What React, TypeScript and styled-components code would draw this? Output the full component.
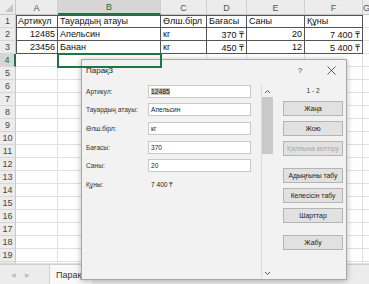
import React from "react";
import styled, { createGlobalStyle, css } from "styled-components";

const Global = createGlobalStyle`
  html, body { margin: 0; padding: 0; background: #ffffff; overflow: hidden; }
  body { width: 369px; height: 284px; font-family: "Liberation Sans", Arial, sans-serif; }
`;

const Page = styled.div`
  position: relative;
  width: 369px;
  height: 284px;
  overflow: hidden;
  display: flex;
  flex-direction: column;
`;

const Sheet = styled.div`
  height: 264px;
  overflow: hidden;
  display: grid;
  grid-template-columns: 16px 42px 103px 46px 40px 58px 58px 1fr;
  grid-template-rows: 15px repeat(19, 13px) 2px;
`;

const Corner = styled.div`
  position: relative;
  background: #ececec;
  border-right: 1px solid #c8c8c8;
  border-bottom: 1px solid #c8c8c8;
  box-sizing: border-box;
  &::after {
    content: "";
    position: absolute;
    right: 2px;
    bottom: 2px;
    border-left: 8px solid transparent;
    border-bottom: 8px solid #c4c4c4;
  }
`;

const ColHead = styled.div<{ $sel?: boolean }>`
  box-sizing: border-box;
  background: ${(p) => (p.$sel ? "#d6d6d6" : "#ececec")};
  color: ${(p) => (p.$sel ? "#1e6b41" : "#555")};
  border-right: 1px solid #cfcfcf;
  border-bottom: ${(p) => (p.$sel ? "2px solid #217346" : "1px solid #c8c8c8")};
  font-size: 9px;
  display: flex;
  align-items: center;
  justify-content: center;
  padding-top: 1px;
`;

const RowHead = styled.div<{ $sel?: boolean }>`
  box-sizing: border-box;
  background: ${(p) => (p.$sel ? "#d6d6d6" : "#ececec")};
  color: ${(p) => (p.$sel ? "#1e6b41" : "#444")};
  border-right: ${(p) => (p.$sel ? "2px solid #217346" : "1px solid #c8c8c8")};
  border-bottom: 1px solid #d8d8d8;
  font-size: 9px;
  display: flex;
  align-items: center;
  justify-content: center;
`;

const Cell = styled.div<{ $boxed?: boolean; $top?: boolean; $left?: boolean; $right?: boolean; $sel?: boolean }>`
  box-sizing: border-box;
  font-size: 9px;
  color: #111;
  white-space: nowrap;
  overflow: visible;
  display: flex;
  align-items: center;
  padding: 0 2px;
  justify-content: ${(p) => (p.$right ? "flex-end" : "flex-start")};
  border-right: 1px solid ${(p) => (p.$boxed ? "#555" : "#e0e0e0")};
  border-bottom: 1px solid ${(p) => (p.$boxed ? "#555" : "#e0e0e0")};
  ${(p) =>
    p.$top &&
    css`
      box-shadow: inset 0 1px 0 #555;
    `}
  ${(p) =>
    p.$left &&
    css`
      box-shadow: inset 1px 0 0 #555 ${p.$top ? ", inset 0 1px 0 #555" : ""};
    `}
  ${(p) =>
    p.$sel &&
    css`
      outline: 2px solid #217346;
      outline-offset: -1px;
      z-index: 1;
    `}
`;

const TabBar = styled.div`
  height: 20px;
  box-sizing: border-box;
  border-top: 1px solid #cfcfcf;
  background: #ececec;
  display: flex;
  align-items: stretch;
`;

const NavArrows = styled.div`
  width: 50px;
  display: flex;
  align-items: center;
  gap: 9px;
  padding-left: 11px;
  box-sizing: border-box;
  color: #bdbdbd;
  font-size: 6px;
  border-right: 1px solid #d0d0d0;
`;

const SheetTab = styled.div`
  background: #f8f8f8;
  padding: 0 6px;
  display: flex;
  align-items: center;
  font-size: 9px;
  color: #333;
`;

/* Dialog */
const Dialog = styled.div`
  position: absolute;
  left: 81px;
  top: 59px;
  width: 266px;
  height: 221px;
  box-sizing: border-box;
  background: #f2f2f2;
  border: 1px solid #a8a8a8;
  box-shadow: 0 1px 6px rgba(0, 0, 0, 0.28);
  display: flex;
  flex-direction: column;
  font-family: "Liberation Sans", Arial, sans-serif;
`;

const TitleBar = styled.div`
  height: 20px;
  display: flex;
  align-items: center;
  padding-left: 4px;
  font-size: 8px;
  color: #222;
`;

const Title = styled.div`
  flex: 1;
`;

const TitleBtn = styled.div<{ $w: number }>`
  width: ${(p) => p.$w}px;
  display: flex;
  justify-content: center;
  align-items: center;
  font-size: 8px;
  color: #444;
`;

const Body = styled.div`
  flex: 1;
  display: flex;
  padding: 5px 3px 0 4px;
`;

const Form = styled.div`
  width: 170px;
  margin-top: -3px;
  display: grid;
  grid-template-columns: 62px 103px;
  grid-auto-rows: 18.6px;
  align-content: start;
  align-items: center;
  font-size: 6.6px;
  color: #333;
`;

const Label = styled.div`
  white-space: nowrap;
`;

const Field = styled.div`
  height: 13px;
  box-sizing: border-box;
  background: #fff;
  border: 1px solid #c9c9c9;
  display: flex;
  align-items: center;
  padding-left: 2px;
  font-size: 6.6px;
  color: #222;
`;

const Selected = styled.span`
  background: #c8c8c8;
  font-size: 6.8px;
  color: #111;
`;

const Value = styled.div`
  padding-left: 3px;
  font-size: 6.6px;
  color: #222;
`;

const ScrollBar = styled.div`
  width: 12px;
  margin-left: 8px;
  height: 194px;
  display: flex;
  flex-direction: column;
  border-left: 1px solid #dcdcdc;
  box-sizing: border-box;
`;

const ScrollArrow = styled.div<{ $h: number }>`
  height: ${(p) => p.$h}px;
  display: flex;
  align-items: center;
  justify-content: center;
`;

const Track = styled.div`
  flex: 1;
  display: flex;
  flex-direction: column;
`;

const Thumb = styled.div`
  height: 57px;
  background: #c9c9c9;
`;

const Side = styled.div`
  width: 61px;
  margin-left: 10px;
  display: flex;
  flex-direction: column;
`;

const Counter = styled.div`
  height: 16px;
  display: flex;
  align-items: center;
  justify-content: center;
  font-size: 6.6px;
  color: #333;
  padding-bottom: 6px;
  box-sizing: border-box;
`;

const Button = styled.div<{ $gap: number; $disabled?: boolean }>`
  margin-top: ${(p) => p.$gap}px;
  height: 15px;
  box-sizing: border-box;
  background: #e1e1e1;
  border: 1px solid #b4b4b4;
  display: flex;
  align-items: center;
  justify-content: center;
  font-size: 6.8px;
  color: ${(p) => (p.$disabled ? "#a8a8a8" : "#222")};
  white-space: nowrap;
`;

const Chevron = ({ up }: { up?: boolean }) => (
  <svg width="7" height="5" viewBox="0 0 7 5">
    <path
      d={up ? "M1 4 L3.5 1.5 L6 4" : "M1 1 L3.5 3.5 L6 1"}
      fill="none"
      stroke="#555"
      strokeWidth="1"
    />
  </svg>
);

const CloseIcon = () => (
  <svg width="9" height="9" viewBox="0 0 9 9">
    <path d="M0.5 0.5 L8.5 8.5 M8.5 0.5 L0.5 8.5" fill="none" stroke="#333" strokeWidth="0.8" />
  </svg>
);

const cols = ["A", "B", "C", "D", "E", "F", "G"];

type Row = { text: string; right?: boolean }[];
const data: Row[] = [
  [
    { text: "Артикул" },
    { text: "Тауардың атауы" },
    { text: "Өлш.бірл" },
    { text: "Бағасы" },
    { text: "Саны" },
    { text: "Құны" },
  ],
  [
    { text: "12485", right: true },
    { text: "Апельсин" },
    { text: "кг" },
    { text: "370 ₸", right: true },
    { text: "20", right: true },
    { text: "7 400 ₸", right: true },
  ],
  [
    { text: "23456", right: true },
    { text: "Банан" },
    { text: "кг" },
    { text: "450 ₸", right: true },
    { text: "12", right: true },
    { text: "5 400 ₸", right: true },
  ],
];

const fields: { label: string; value: React.ReactNode; plain?: boolean }[] = [
  { label: "Артикул:", value: <Selected>12485</Selected> },
  { label: "Тауардың атауы:", value: "Апельсин" },
  { label: "Өлш.бірл:", value: "кг" },
  { label: "Бағасы:", value: "370" },
  { label: "Саны:", value: "20" },
  { label: "Құны:", value: "7 400 ₸", plain: true },
];

const buttons: { text: string; gap: number; disabled?: boolean }[] = [
  { text: "Жаңа", gap: 0 },
  { text: "Жою", gap: 5 },
  { text: "Қалпына келтіру", gap: 5, disabled: true },
  { text: "Адыңғыны табу", gap: 12 },
  { text: "Келесісін табу", gap: 5 },
  { text: "Шарттар", gap: 5 },
  { text: "Жабу", gap: 12 },
];

export default function App() {
  const rows = Array.from({ length: 19 }, (_, i) => i + 1);
  return (
    <Page>
      <Global />
      <Sheet>
        <Corner />
        {cols.map((c) => (
          <ColHead key={c} $sel={c === "B"}>
            {c}
          </ColHead>
        ))}
        {rows.map((r) => (
          <React.Fragment key={r}>
            <RowHead $sel={r === 4}>{r}</RowHead>
            {cols.map((c, ci) => {
              const d = r <= 3 && ci < 6 ? data[r - 1][ci] : undefined;
              const boxed = r <= 3 && ci < 6;
              return (
                <Cell
                  key={c}
                  $boxed={boxed}
                  $top={boxed && r === 1}
                  $left={boxed && ci === 0}
                  $right={d?.right}
                  $sel={r === 4 && c === "B"}
                >
                  {d?.text}
                </Cell>
              );
            })}
          </React.Fragment>
        ))}
        <RowHead />
        {cols.map((c) => (
          <Cell key={c} />
        ))}
      </Sheet>
      <TabBar>
        <NavArrows>
          <span>◀</span>
          <span>▶</span>
        </NavArrows>
        <SheetTab>Парақ3</SheetTab>
      </TabBar>

      <Dialog>
        <TitleBar>
          <Title>Парақ3</Title>
          <TitleBtn $w={32}>?</TitleBtn>
          <TitleBtn $w={30}>
            <CloseIcon />
          </TitleBtn>
        </TitleBar>
        <Body>
          <Form>
            {fields.map((f) => (
              <React.Fragment key={f.label}>
                <Label>{f.label}</Label>
                {f.plain ? <Value>{f.value}</Value> : <Field>{f.value}</Field>}
              </React.Fragment>
            ))}
          </Form>
          <ScrollBar>
            <ScrollArrow $h={12}>
              <Chevron up />
            </ScrollArrow>
            <Track>
              <Thumb />
            </Track>
            <ScrollArrow $h={11}>
              <Chevron />
            </ScrollArrow>
          </ScrollBar>
          <Side>
            <Counter>1 - 2</Counter>
            {buttons.map((b) => (
              <Button key={b.text} $gap={b.gap} $disabled={b.disabled}>
                {b.text}
              </Button>
            ))}
          </Side>
        </Body>
      </Dialog>
    </Page>
  );
}
